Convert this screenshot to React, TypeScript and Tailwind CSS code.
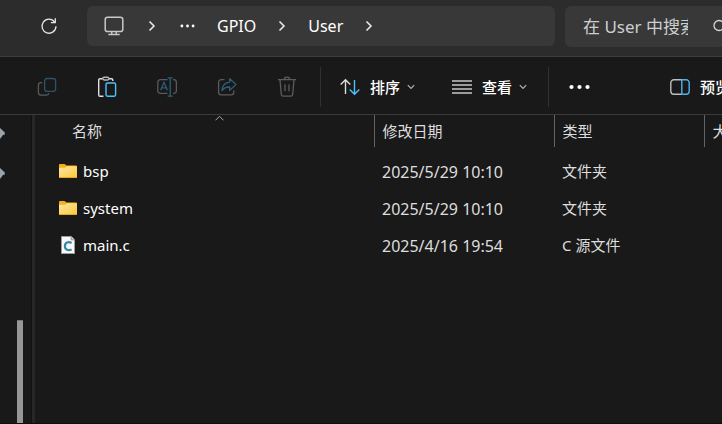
import type { ReactNode } from "react";

const CRUMBS = ["GPIO", "User"];

const FILES = [
  { name: "bsp", modified: "2025/5/29 10:10", type: "文件夹", folder: true },
  { name: "system", modified: "2025/5/29 10:10", type: "文件夹", folder: true },
  { name: "main.c", modified: "2025/4/16 19:54", type: "C 源文件", folder: false },
];

const cellClass = "truncate p-0 pl-2 text-left font-normal";

function ChevronRight() {
  return (
    <svg width="8" height="14" viewBox="0 0 8 14" fill="none" stroke="#e8e8e8" strokeWidth="1.6">
      <path d="M1.5 2.5 6 7l-4.5 4.5" />
    </svg>
  );
}

function ChevronDown() {
  return (
    <svg width="8" height="6" viewBox="0 0 8 6" fill="none" stroke="#b5b5b5" strokeWidth="1.2">
      <path d="M.8 1.2 4 4.4l3.2-3.2" />
    </svg>
  );
}

function RefreshIcon() {
  return (
    <svg width="18" height="18" viewBox="0 0 18 18" fill="none" stroke="#e6e6e6" strokeWidth="1.3">
      <path d="M16 9.3A7 7 0 1 1 14.6 5" />
      <path d="M15.3 1.3v4.3h-4.4" />
    </svg>
  );
}

function MonitorIcon() {
  return (
    <svg width="20" height="20" viewBox="0 0 20 20" fill="none" stroke="#c8c8c8" strokeWidth="1.5">
      <rect x="1.2" y="1.2" width="17.6" height="14.4" rx="2.4" />
      <path d="M7.7 15.8v2M12.3 15.8v2M4.3 18.6h11.4" />
    </svg>
  );
}

function DotsIcon({ size }: { size: "small" | "large" }) {
  const small = size === "small";
  return (
    <svg width={small ? 15 : 21} height="6" viewBox={small ? "0 0 15 6" : "0 0 21 6"} fill="#fff">
      <circle cx={small ? 1.9 : 2.5} cy="3" r={small ? 1.4 : 2.1} />
      <circle cx={small ? 7.5 : 10.5} cy="3" r={small ? 1.4 : 2.1} />
      <circle cx={small ? 13.1 : 18.5} cy="3" r={small ? 1.4 : 2.1} />
    </svg>
  );
}

function CopyIcon() {
  return (
    <svg width="20" height="20" viewBox="0 0 20 20" fill="none" strokeWidth="1.3">
      <path d="M5.2 5.6H4a2.6 2.6 0 0 0-2.6 2.6v7.4A2.6 2.6 0 0 0 4 18.2h5.4a2.6 2.6 0 0 0 2.5-2" stroke="#5a5a5a" />
      <rect x="7.6" y="1.5" width="11" height="12.8" rx="2.4" stroke="#2c5369" />
    </svg>
  );
}

function PasteIcon() {
  return (
    <svg width="20" height="22" viewBox="0 0 20 22" fill="none" strokeWidth="1.4">
      <path d="M6.5 20.2H3A1.3 1.3 0 0 1 1.7 19V4A1.3 1.3 0 0 1 3 2.7h2.5M12 2.700h2.500A1.300 1.300 0 0 1 15.800 4v1" stroke="#e0e0e0" />
      <rect x="5.7" y="1.2" width="6.2" height="2.8" rx="1.4" stroke="#b5b5b5" />
      <rect x="9" y="7" width="9.6" height="13.2" rx="1.4" stroke="#4cc2ff" />
    </svg>
  );
}

function RenameIcon() {
  return (
    <svg width="20" height="20" viewBox="0 0 20 20" fill="none" strokeWidth="1.3">
      <path d="M10.5 2.7H3.4A2.6 2.6 0 0 0 .8 5.3v8.4a2.6 2.6 0 0 0 2.6 2.6h7.1M16 2.7h.8a2.6 2.6 0 0 1 2.6 2.6v8.4a2.6 2.6 0 0 1-2.6 2.6H16" stroke="#5a5a5a" />
      <path d="M3.6 13.3 7 5.3l3.4 8M4.8 10.8h4.4M10.7.8h5M10.7 19.2h5M13.2.8v18.4" stroke="#2c5f7c" />
    </svg>
  );
}

function ShareIcon() {
  return (
    <svg width="20" height="20" viewBox="0 0 20 20" fill="none" strokeWidth="1.3" strokeLinejoin="round">
      <path d="M7.5 2.7H4.2a2.6 2.6 0 0 0-2.6 2.6v9.9a2.6 2.6 0 0 0 2.6 2.6h10a2.6 2.6 0 0 0 2.6-2.6v-1.6" stroke="#5a5a5a" />
      <path d="M12.7 1.6 19 7.5l-6.3 5.9V10C9.2 9.8 7 10.8 5 13.6 5.3 8.6 8 5.4 12.7 5.1Z" stroke="#2c5f7c" />
    </svg>
  );
}

function TrashIcon() {
  return (
    <svg width="20" height="22" viewBox="0 0 20 22" fill="none" stroke="#5c5c5c" strokeWidth="1.3">
      <path d="M1 3.7h18M7.3 3.4a2.7 2.2 0 0 1 5.4 0M3 3.9l1.3 14.5a2 2 0 0 0 2 1.8h7.4a2 2 0 0 0 2-1.8L17 3.9M8 8.3v6.900M12 8.300v6.900" />
    </svg>
  );
}

function SortIcon() {
  return (
    <svg width="20" height="18" viewBox="0 0 20 18" fill="none" strokeWidth="1.4">
      <path d="M5.5 16V2M.7 6.6l4.800-4.800 4.800 4.800" stroke="#dcdcdc" />
      <path d="M14.5 2v14M9.7 11.4l4.800 4.800 4.800-4.800" stroke="#4cc2ff" />
    </svg>
  );
}

function ListIcon() {
  return (
    <svg width="20" height="14" viewBox="0 0 20 14" fill="none" stroke="#c8c8c8" strokeWidth="1.3">
      <path d="M0 1h20M0 5h20M0 9h20M0 13h20" />
    </svg>
  );
}

function PreviewIcon() {
  return (
    <svg width="20" height="16" viewBox="0 0 20 16" fill="none" strokeWidth="1.4">
      <path d="M11.5.8H3.8a3 3 0 0 0-3 3v8.400a3 3 0 0 0 3 3h7.700" stroke="#bdbdbd" />
      <path d="M11.8.8h4.400a3 3 0 0 1 3 3v8.400a3 3 0 0 1-3 3h-4.400Z" stroke="#4cb4ea" />
    </svg>
  );
}

function SearchIcon() {
  return (
    <svg className="shrink-0" width="16" height="16" viewBox="0 0 16 16" fill="none" stroke="#d6d6d6" strokeWidth="1.3">
      <circle cx="6" cy="6.5" r="5" />
      <path d="m9.6 10.1 5 5" />
    </svg>
  );
}

function PinIcon() {
  return (
    <svg className="block" width="5" height="12" viewBox="0 0 5 12" fill="#99a3aa">
      <path d="M0 0 4.800 4.500V6.500L3 7 0 11Z" />
    </svg>
  );
}

function FolderIcon() {
  return (
    <svg className="mb-[2px] shrink-0" width="18" height="14" viewBox="0 0 18 14">
      <defs>
        <linearGradient id="folder" x1="0" y1="0" x2="1" y2="1">
          <stop offset="0" stopColor="#ffe8a0" />
          <stop offset="1" stopColor="#fcc63c" />
        </linearGradient>
      </defs>
      <path d="M0 1q0-1 1-1h4.500l2 1.500H17q1 0 1 1V8H0Z" fill="#f4b01c" />
      <path d="M0 4.500q0-.7.700-.7H6L8 2.300h9.300q.7 0 .7.700v10q0 1-1 1H1q-1 0-1-1Z" fill="url(#folder)" />
      <path d="M0 13h18q0 1-1 1H1q-1 0-1-1Z" fill="#eda71c" />
    </svg>
  );
}

function CFileIcon() {
  return (
    <svg className="mx-[2px] mb-[2px] shrink-0" width="14" height="18" viewBox="0 0 14 18">
      <path d="M.5.5h9.700l3.300 3.300v13.700H.5Z" fill="#f7f8f8" stroke="#9b9b9b" />
      <path d="M10.2.5v3.300h3.300" fill="#ddd" stroke="#8d8d8d" />
      <path d="M10.600 6.900C7.300 5.200 3.900 6.600 3.900 10.300S7.300 15 10.600 13.500" fill="none" stroke="#3987a8" strokeWidth="2.2" />
    </svg>
  );
}

function ToolButton({ label, disabled, children }: { label: string; disabled?: boolean; children: ReactNode }) {
  return (
    <button type="button" aria-label={label} disabled={disabled} className="flex h-10 w-[60px] shrink-0 items-center justify-center">
      {children}
    </button>
  );
}

export default function App() {
  return (
    <div className="flex h-screen flex-col overflow-hidden border-b border-[#100c10] bg-[#191919] font-['Noto_Sans','Noto_Sans_CJK_SC',sans-serif] text-white">
      <header className="flex h-[57px] shrink-0 border-b border-[#3c3c3c] bg-[#2c2c2c] pt-[6px]">
        <button type="button" aria-label="刷新" className="ml-[29px] flex h-10 w-10 shrink-0 items-center justify-center">
          <RefreshIcon />
        </button>
        <nav aria-label="地址" className="ml-[18px] flex h-10 min-w-0 flex-1 items-center rounded-md bg-[#383838] pl-[17px]">
          <button type="button" aria-label="此电脑" className="shrink-0">
            <MonitorIcon />
          </button>
          <span className="ml-6">
            <ChevronRight />
          </span>
          <button type="button" aria-label="更多位置" className="ml-6 shrink-0">
            <DotsIcon size="small" />
          </button>
          {CRUMBS.map((crumb) => (
            <span key={crumb} className="ml-[22px] flex items-center gap-[22px]">
              <button type="button" className="text-base">
                {crumb}
              </button>
              <ChevronRight />
            </span>
          ))}
        </nav>
        <label className="ml-[10px] flex h-[41px] w-[157px] shrink-0 items-center rounded-l-md bg-[#383838] pl-[18px]">
          <input
            type="text"
            aria-label="搜索"
            placeholder="在 User 中搜索"
            className="w-[105px] shrink-0 bg-transparent text-[17px] outline-none placeholder:text-[#cecece]"
          />
          <span className="ml-[25px] w-[9px] shrink-0 overflow-hidden">
            <SearchIcon />
          </span>
        </label>
      </header>

      <div className="flex h-[58px] shrink-0 items-center overflow-hidden border-b border-[#3b3b3b] pl-[17px] pt-[3px] text-[15px] font-medium">
        <ToolButton label="复制" disabled>
          <CopyIcon />
        </ToolButton>
        <ToolButton label="粘贴">
          <PasteIcon />
        </ToolButton>
        <ToolButton label="重命名" disabled>
          <RenameIcon />
        </ToolButton>
        <ToolButton label="共享" disabled>
          <ShareIcon />
        </ToolButton>
        <ToolButton label="删除" disabled>
          <TrashIcon />
        </ToolButton>
        <div className="ml-[3px] h-10 w-px shrink-0 bg-[#303030]" />
        <button type="button" className="ml-[19px] flex shrink-0 items-center">
          <SortIcon />
          <span className="ml-[10px] mr-[7px]">排序</span>
          <ChevronDown />
        </button>
        <button type="button" className="ml-[37px] flex shrink-0 items-center">
          <ListIcon />
          <span className="ml-[10px] mr-[7px]">查看</span>
          <ChevronDown />
        </button>
        <div className="ml-[21px] h-10 w-px shrink-0 bg-[#303030]" />
        <button type="button" aria-label="查看更多" className="ml-5 shrink-0">
          <DotsIcon size="large" />
        </button>
        <button type="button" className="ml-auto -mr-2 flex shrink-0 items-center">
          <PreviewIcon />
          <span className="ml-[10px]">预览</span>
        </button>
      </div>

      <div className="flex min-h-0 flex-1">
        <aside className="flex w-[31px] shrink-0 justify-between">
          <div className="flex flex-col gap-7 pt-[13px]">
            <PinIcon />
            <PinIcon />
          </div>
          <div className="mr-2 mt-[205px] w-[6px] border-t border-[#777] bg-[#979797]" />
        </aside>
        <div className="w-1 shrink-0 border-l border-[#111] bg-[#272727]" />
        <main className="min-w-0 flex-1 overflow-hidden">
          <table className="w-full table-fixed border-collapse text-[15px] text-[#dedede]">
            <colgroup>
              <col />
              <col className="w-[180px]" />
              <col className="w-[150px]" />
              <col className="w-[18px]" />
            </colgroup>
            <thead>
              <tr className="h-8">
                <th className="relative p-0 pl-[37px] pt-px text-left font-normal">
                  名称
                  <svg className="absolute left-[180px] top-0" width="9" height="6" viewBox="0 0 9 6" fill="none" stroke="#a8a8a8">
                    <path d="M.5 5.300 4.500 1.300l4 4" />
                  </svg>
                </th>
                <th className={`${cellClass} border-l border-[#636363]`}>修改日期</th>
                <th className={`${cellClass} border-l border-[#636363]`}>类型</th>
                <th className="overflow-hidden whitespace-nowrap border-l border-[#636363] p-0 pl-2 text-left font-normal">大小</th>
              </tr>
            </thead>
            <tbody>
              <tr aria-hidden="true" className="h-[6px]" />
              {FILES.map((file) => (
                <tr key={file.name} className="h-[37px]">
                  <td className="p-0 pl-6">
                    <a href="#" className="flex items-center gap-[6px] text-white">
                      {file.folder ? <FolderIcon /> : <CFileIcon />}
                      {file.name}
                    </a>
                  </td>
                  <td className={`${cellClass} text-base`}>{file.modified}</td>
                  <td className={cellClass}>{file.type}</td>
                  <td className="p-0" />
                </tr>
              ))}
            </tbody>
          </table>
        </main>
      </div>
    </div>
  );
}
